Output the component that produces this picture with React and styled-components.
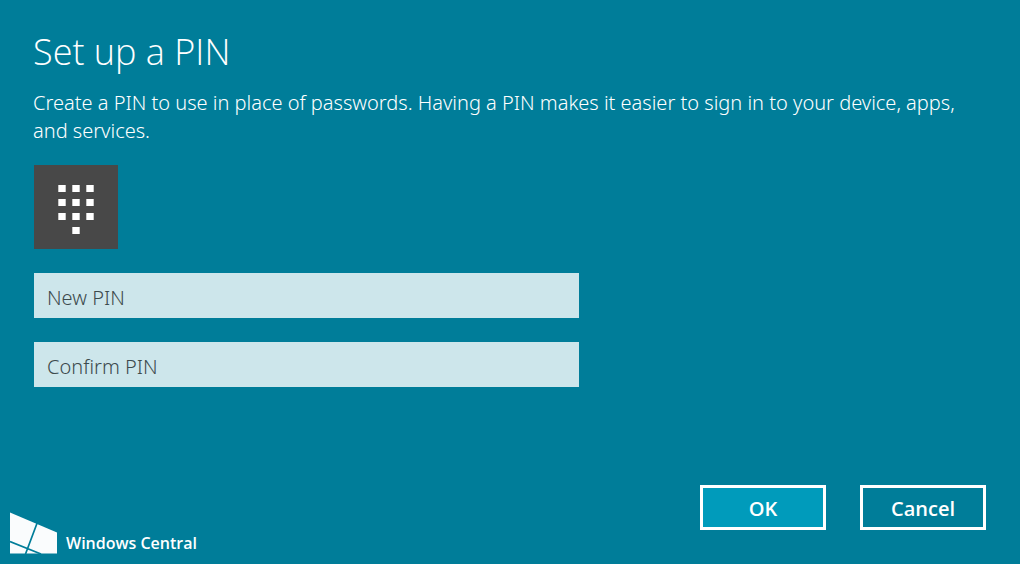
import React from 'react';
import styled, { createGlobalStyle } from 'styled-components';

const GlobalStyle = createGlobalStyle`
  *, *::before, *::after { box-sizing: border-box; }
  body {
    margin: 0;
    background: #007d99;
    color: #fff;
    font-family: "Open Sans", "Noto Sans", sans-serif;
  }
`;

const Page = styled.form`
  display: flex;
  flex-direction: column;
  justify-content: space-between;
  min-height: 100vh;
`;

const Content = styled.main`
  display: flex;
  flex-direction: column;
  align-items: flex-start;
  gap: 24px;
  padding: 28px 34px 24px;
`;

const Intro = styled.header`
  display: flex;
  flex-direction: column;
  gap: 13px;
  margin: 0 0 -4px -1px;
`;

const Title = styled.h1`
  margin: 0;
  font-size: 36px;
  font-weight: 300;
  line-height: 48px;
`;

const Description = styled.p`
  max-width: 936px;
  margin: 0;
  font-family: "Noto Sans", "Open Sans", sans-serif;
  font-size: 20px;
  font-weight: 300;
  line-height: 28px;
`;

const Tile = styled.div`
  display: flex;
  width: 84px;
  height: 84px;
  background: #484848;
`;

const PinInput = styled.input`
  width: 100%;
  max-width: 545px;
  height: 45px;
  padding: 4px 13px 0;
  border: 0;
  border-radius: 0;
  background: #cde6eb;
  color: #3c4a4d;
  font: 300 20px "Noto Sans", "Open Sans", sans-serif;
  &::placeholder { color: #3c4a4d; opacity: 1; }
`;

const Footer = styled.footer`
  display: flex;
  align-items: flex-end;
  justify-content: space-between;
  padding: 0 34px 10px 10px;
`;

const Brand = styled.div`
  display: flex;
  align-items: flex-end;
  gap: 9px;
  font-size: 16px;
  font-weight: 600;
  line-height: 22px;
`;

const Actions = styled.div`
  display: flex;
  gap: 34px;
  margin-bottom: 24px;
`;

const Button = styled.button`
  width: 126px;
  height: 45px;
  padding: 1px 0 0;
  border: 3px solid #fff;
  border-radius: 0;
  background: ${({ $primary }) => ($primary ? '#009bbb' : 'transparent')};
  color: #fff;
  font: 600 20px "Open Sans", "Noto Sans", sans-serif;
`;

const dots = [
  [24, 20], [38, 20], [52, 20],
  [24, 34], [38, 34], [52, 34],
  [24, 48], [38, 48], [52, 48],
  [38, 62],
];

const KeypadIcon = () => (
  <svg width="84" height="84" viewBox="0 0 84 84" aria-hidden="true">
    {dots.map(([x, y]) => (
      <g key={`${x}-${y}`}>
        <rect x={x} y={y} width="8" height="7" fill="#c8c8c8" />
        <rect x={x + 1} y={y} width="6" height="7" fill="#fff" />
      </g>
    ))}
  </svg>
);

const WindowLogo = () => (
  <svg width="47" height="42" viewBox="0 0 47 42" aria-hidden="true">
    <path d="M0 .5 47 20.5V41.5H0Z" fill="#fafcfd" />
    <path d="M27.5 10 15.5 42M0 29.5 31 42" fill="none" stroke="#007d99" strokeWidth="1.7" />
  </svg>
);

export default function App() {
  return (
    <>
      <GlobalStyle />
      <Page onSubmit={(e) => e.preventDefault()}>
        <Content>
          <Intro>
            <Title>Set up a PIN</Title>
            <Description>
              Create a PIN to use in place of passwords. Having a PIN makes it easier to sign in to
              your device, apps, and services.
            </Description>
          </Intro>
          <Tile><KeypadIcon /></Tile>
          <PinInput type="password" aria-label="New PIN" placeholder="New PIN" />
          <PinInput type="password" aria-label="Confirm PIN" placeholder="Confirm PIN" />
        </Content>
        <Footer>
          <Brand>
            <WindowLogo />
            <span>Windows Central</span>
          </Brand>
          <Actions>
            <Button type="submit" $primary>OK</Button>
            <Button type="button">Cancel</Button>
          </Actions>
        </Footer>
      </Page>
    </>
  );
}
